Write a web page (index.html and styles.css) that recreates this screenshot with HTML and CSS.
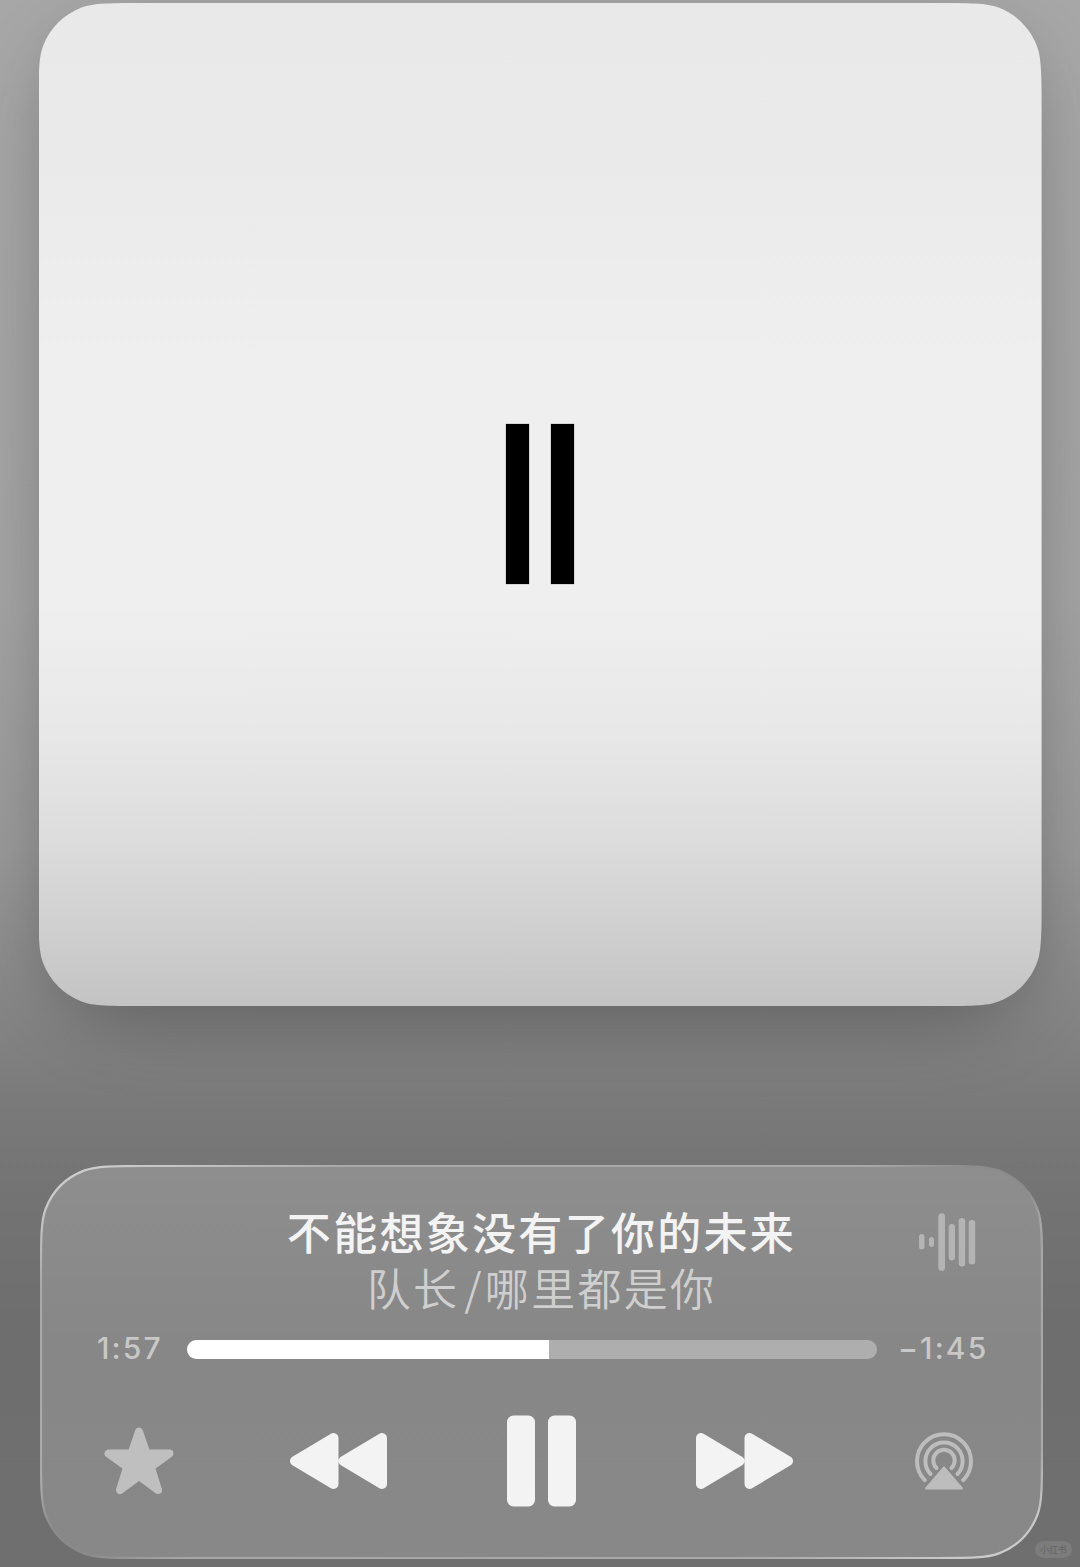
FILE: index.html
```html
<!DOCTYPE html>
<html lang="zh-CN">
<head>
<meta charset="utf-8">
<title>不能想象没有了你的未来</title>
<link rel="stylesheet" href="styles.css">
</head>
<body>
<main class="screen">
  <div class="artwork-shadow">
    <div class="artwork">
      <span class="artwork-bar"></span>
      <span class="artwork-bar"></span>
    </div>
  </div>

  <section class="player">
    <svg class="player-glass" viewBox="0 0 1003 394" aria-hidden="true">
      <defs>
        <linearGradient id="glass" x1="0" y1="0" x2="0" y2="1">
          <stop offset="0" stop-color="#8e8e8e"/>
          <stop offset=".45" stop-color="#878787"/>
          <stop offset="1" stop-color="#888888"/>
        </linearGradient>
        <linearGradient id="rim" x1="0" y1="0" x2="1" y2="1">
          <stop offset="0" stop-color="#d2d2d2"/>
          <stop offset=".07" stop-color="#c4c4c4"/>
          <stop offset=".15" stop-color="#a9a9a9"/>
          <stop offset=".41" stop-color="#a9a9a9"/>
          <stop offset=".465" stop-color="#8c8c8c"/>
          <stop offset=".52" stop-color="#8a8a8a"/>
          <stop offset=".57" stop-color="#a6a6a6"/>
          <stop offset=".86" stop-color="#a9a9a9"/>
          <stop offset=".95" stop-color="#c8c8c8"/>
          <stop offset="1" stop-color="#d0d0d0"/>
        </linearGradient>
      </defs>
      <path fill="url(#glass)" stroke="url(#rim)" stroke-width="2.2" d="M108 1H895C930 1 947 1 959 5.600C977 12.500 990.500 26 997.400 44C1002 56 1002 73 1002 108V286C1002 321 1002 338 997.400 350C990.500 368 977 381.500 959 388.400C947 393 930 393 895 393H108C73 393 56 393 44 388.400C26 381.500 12.500 368 5.600 350C1 338 1 321 1 286V108C1 73 1 56 5.600 44C12.500 26 26 12.500 44 5.600C56 1 73 1 108 1Z"/>
    </svg>

    <header class="track">
      <div class="track-text">
        <h1 class="title">不能想象没有了你的未来</h1>
        <p class="artist">队长<span class="slash">/</span>哪里都是你</p>
      </div>
      <svg class="waveform" viewBox="0 0 58 58" aria-hidden="true">
        <g fill="#b4b4b4">
          <rect x="0" y="21" width="5.500" height="15.500" rx="2.750"/>
          <rect x="10" y="24" width="5" height="10" rx="2.500"/>
          <rect x="19.300" y="0.300" width="6.700" height="57.500" rx="3.350"/>
          <rect x="29.700" y="11" width="6.300" height="36.500" rx="3.150"/>
          <rect x="39.700" y="5" width="6.500" height="48.500" rx="3.250"/>
          <rect x="49.700" y="7" width="6.500" height="44.500" rx="3.250"/>
        </g>
      </svg>
    </header>

    <div class="timeline">
      <span class="time">1:57</span>
      <div class="progress"><div class="progress-fill" style="width:52.500%"></div></div>
      <span class="time time-left">−1:45</span>
    </div>

    <div class="controls">
      <svg class="star" viewBox="0 0 70 68" width="70" height="68">
        <path d="M35 4.500L42.500 26.500H65.500L46.800 40L54 63L35 49L16 63L23.200 40L4.500 26.500H27.500Z" fill="#bfbfbf" stroke="#bfbfbf" stroke-width="8" stroke-linejoin="round"/>
      </svg>
      <svg class="skip" viewBox="0 0 97 56" width="97" height="56">
        <path d="M5 28L43.500 5V51ZM53.500 28L92 5V51Z" fill="#f3f3f3" stroke="#f3f3f3" stroke-width="10" stroke-linejoin="round"/>
      </svg>
      <svg class="pause" viewBox="0 0 69 92" width="69" height="92">
        <rect x="0" y="0.500" width="28" height="91" rx="6.500" fill="#f3f3f3"/>
        <rect x="41" y="0.500" width="28" height="91" rx="6.500" fill="#f3f3f3"/>
      </svg>
      <svg class="skip" viewBox="0 0 97 56" width="97" height="56">
        <path d="M5 5L43.500 28L5 51ZM53.500 5L92 28L53.500 51Z" fill="#f3f3f3" stroke="#f3f3f3" stroke-width="10" stroke-linejoin="round"/>
      </svg>
      <svg class="airplay" viewBox="0 0 58 58" width="58" height="58">
        <g fill="none" stroke="#bdbdbd" stroke-width="4" stroke-linecap="round">
          <path d="M9.700 48.100A27 27 0 1 1 48.300 48.100"/>
          <path d="M15.500 42A18.600 18.600 0 1 1 42.500 42"/>
          <path d="M21.500 36A10.700 10.700 0 1 1 36.500 36"/>
        </g>
        <path d="M29 35.500L47 56.500H11Z" fill="#bdbdbd" stroke="#bdbdbd" stroke-width="2" stroke-linejoin="round"/>
      </svg>
    </div>
  </section>

  <span class="watermark">小红书</span>
</main>
</body>
</html>
```
FILE: styles.css
```css
* {
  box-sizing: border-box;
}

body {
  margin: 0;
  font-family: Inter, "Noto Sans CJK SC", sans-serif;
}

.screen {
  position: relative;
  width: 1080px;
  height: 1567px;
  overflow: hidden;
  padding: 3px 37px 0 38.5px;
  background: linear-gradient(#a7a7a7 0, #a4a4a4 600px, #999 850px, #848484 1020px, #7a7a7a 1100px, #737373 1200px, #6e6e6e 1320px, #6f6f6f 1567px);
}

.artwork-shadow {
  width: 1003px;
  height: 1003px;
  border-radius: 84px;
  box-shadow: 0 24px 80px -16px rgba(0, 0, 0, .32);
}

.artwork {
  display: flex;
  justify-content: center;
  gap: 22px;
  height: 1003px;
  padding-top: 421px;
  background: linear-gradient(#e9e9e9 0, #eaeaea 160px, #efefef 360px, #efefef 600px, #e8e8e8 730px, #dcdcdc 840px, #cfcfcf 930px, #c3c3c3 1003px);
  clip-path: path("M107 0H896C931 0 948 0 960 4.600C978 11.500 991.500 25 998.400 43C1003 55 1003 72 1003 107V896C1003 931 1003 948 998.400 960C991.500 978 978 991.500 960 998.400C948 1003 931 1003 896 1003H107C72 1003 55 1003 43 998.400C25 991.500 11.500 978 4.600 960C0 948 0 931 0 896V107C0 72 0 55 4.600 43C11.500 25 25 11.500 43 4.600C55 0 72 0 107 0Z");
}

.artwork-bar {
  width: 23px;
  height: 160px;
  background: #000;
  box-shadow: 0 0 1px #555;
}

.player {
  position: relative;
  width: 1003px;
  height: 394px;
  margin: 159px 0 0 1.5px;
  padding-top: 38px;
}

.player-glass {
  position: absolute;
  inset: 0;
  width: 1003px;
  height: 394px;
}

.track {
  position: relative;
  display: grid;
  grid-template-columns: 124px 1fr 124px;
  align-items: start;
  height: 128px;
}

.track-text {
  grid-column: 2;
  text-align: center;
  white-space: nowrap;
}

.title,
.artist {
  margin: 0;
  height: 56px;
  line-height: 56px;
  font-size: 44px;
  font-family: "Noto Sans CJK SC", sans-serif;
  letter-spacing: 2.3px;
}

.title {
  font-weight: 500;
  color: #f3f3f3;
}

.artist {
  font-weight: 350;
  color: #cfcfcf;
}

.slash {
  margin: 0 1px 0 5px;
}

.waveform {
  width: 58px;
  height: 58px;
  margin-top: 10px;
}

.timeline {
  position: relative;
  display: flex;
  align-items: center;
  height: 36px;
  padding-left: 57px;
}

.time {
  width: 90px;
  margin-top: -2px;
  font-size: 30px;
  font-weight: 500;
  letter-spacing: 2.1px;
  color: #c8c8c8;
}

.time-left {
  width: 100px;
  margin-left: 21px;
}

.progress {
  width: 690px;
  height: 19px;
  border-radius: 9.5px;
  overflow: hidden;
  background: #aeaeae;
}

.progress-fill {
  height: 100%;
  background: #fff;
}

.controls {
  position: relative;
  display: grid;
  grid-template-columns: 196px 203px 203px 203px 196px;
  justify-content: center;
  justify-items: center;
  align-items: center;
  height: 92px;
  margin-top: 48px;
}

.watermark {
  position: absolute;
  right: 8px;
  bottom: 9px;
  width: 37px;
  height: 17px;
  border-radius: 9px;
  background: #7c7c7c;
  color: #666;
  font: 9px/17px "Noto Sans CJK SC", sans-serif;
  text-align: center;
}
```
